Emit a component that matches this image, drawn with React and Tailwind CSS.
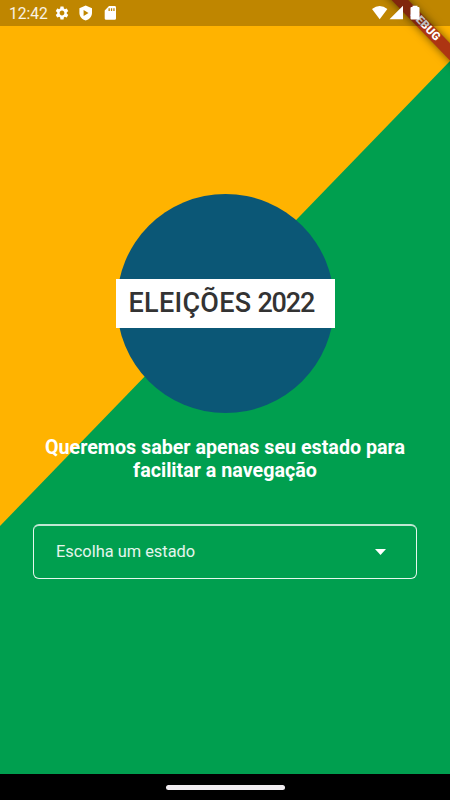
import React from 'react';
import { MdSettings } from 'react-icons/md';

const StatusBar = () => {
  return (
    <header className="relative z-20 flex h-[26px] items-center justify-between bg-black/25 pl-[9px] pr-[29px] text-white">
      <div className="flex items-center">
        <span className="w-[45px] pt-px text-[15.6px] leading-[26px] text-white/90">12:42</span>
        <MdSettings className="size-4" />
        {/* Play Protect shield */}
        <svg className="ml-[8px] h-4 w-4" viewBox="0 0 16 16" fill="currentColor">
          <path
            fillRule="evenodd"
            d="M7.700 .600 14 3.200V8C14 11.500 11.200 14.500 7.700 15.600 4.200 14.500 1.400 11.500 1.400 8V3.200ZM5.600 4.900V10.900L10.500 7.900Z"
          />
        </svg>
        {/* SD card */}
        <svg className="ml-[9px] h-4 w-4" viewBox="0 0 16 16" fill="currentColor">
          <path
            fillRule="evenodd"
            d="M6 1H11.600Q13 1 13 2.400V13.400Q13 14.800 11.600 14.800H3.100Q1.700 14.800 1.700 13.400V5.500ZM5.500 3.300V5.900H6.800V3.300ZM7.900 3.300V5.900H9.200V3.300ZM10.300 3.300V5.900H11.600V3.300Z"
          />
        </svg>
      </div>

      {/* Wifi, signal and battery */}
      <svg className="h-[16px] w-[49px]" viewBox="0 0 49 16" fill="currentColor">
        <path d="M0 4Q7.700 -2 15.400 4L7.700 14.300Z" />
        <path d="M17.500 14.300 31 .700V14.300Z" />
        <path d="M40.500 .700H45.500V2H46.500Q47.500 2 47.500 3V13.600Q47.500 14.600 46.500 14.600H39.500Q38.500 14.600 38.500 13.600V3Q38.500 2 39.500 2H40.500Z" />
      </svg>
    </header>
  );
};

const DebugBanner = () => {
  return (
    <div className="absolute right-0 top-0 z-10 h-[90px] w-[90px] overflow-hidden">
      <div className="absolute left-[5px] top-[20px] flex h-[12px] w-[120px] rotate-[46deg] items-center justify-center bg-[#ad3512] text-[11.5px] font-black leading-none text-white shadow-[0_0_9px_rgba(0,0,0,0.55)]">
        DEBUG
      </div>
    </div>
  );
};

const Logo = () => {
  return (
    <div className="flex h-[219px] w-[219px] items-center justify-center">
      <div className="flex h-[219px] w-[217px] shrink-0 items-center justify-center rounded-full bg-[#0b5776]">
        <div className="flex h-[49px] w-[219px] shrink-0 items-center gap-[6px] whitespace-nowrap bg-white pl-[13px] text-[27px] font-medium leading-none text-[#333]">
          <span className="tracking-[0.3px]">ELEIÇÕES</span>
          <span className="tracking-[-1.2px]">2022</span>
        </div>
      </div>
    </div>
  );
};

const StateSelect = () => {
  return (
    <button
      type="button"
      className="flex h-[55px] w-[384px] items-center justify-between rounded-[6px] border border-t-2 border-white/90 border-t-white/75 pl-[22px] pr-[30px] text-white"
    >
      <span className="text-[16.4px] text-white/90">Escolha um estado</span>
      <svg className="h-[6px] w-[11px]" viewBox="0 0 11 6" fill="currentColor">
        <path d="M0 0H11L5.500 6Z" />
      </svg>
    </button>
  );
};

const App = () => {
  return (
    <div className="relative isolate flex h-[800px] w-[450px] flex-col overflow-hidden bg-[#009f4f] font-['Roboto',sans-serif]">
      {/* Yellow half of the flag background */}
      <div className="absolute inset-0 -z-10 bg-[#ffb300] [clip-path:polygon(0_0,100%_0,100%_61px,0_526px)]" />
      <StatusBar />
      <DebugBanner />

      <main className="flex flex-1 flex-col items-center pt-[168px]">
        <Logo />
        <h1 className="mt-[24px] text-center text-[19.7px] font-bold leading-[22.5px] text-white">
          Queremos saber apenas seu estado para
          <br />
          facilitar a navegação
        </h1>
        <div className="mt-[42px]">
          <StateSelect />
        </div>
      </main>

      <footer className="flex h-[26px] items-center justify-center bg-black">
        <div className="h-[5px] w-[119px] rounded-full bg-[#f1edf1]" />
      </footer>
    </div>
  );
};

export default App;
